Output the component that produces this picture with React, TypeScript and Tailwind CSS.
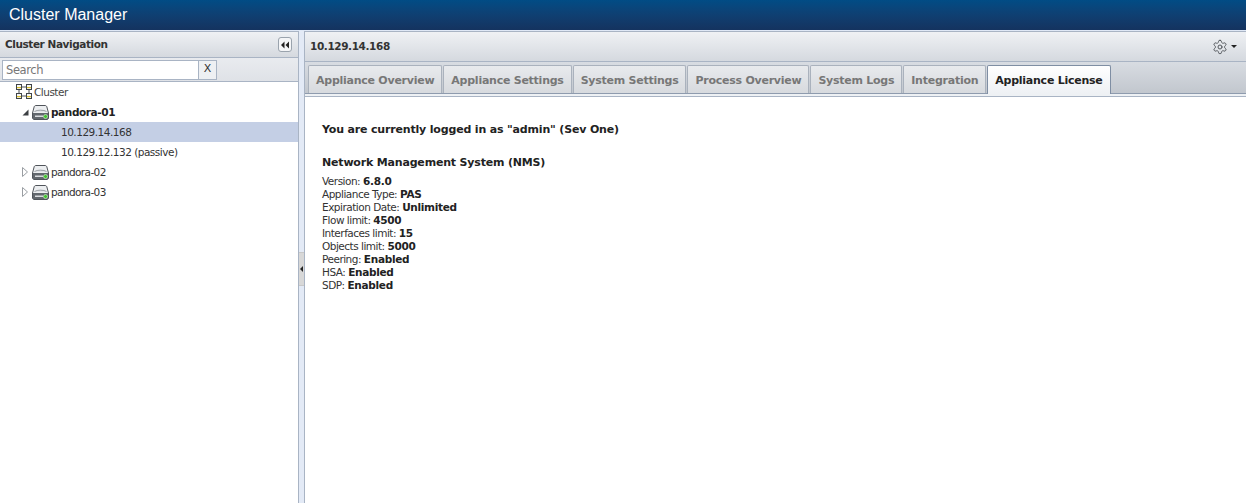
const font = "font-['DejaVu_Sans',sans-serif]";

function ServerIcon() {
  return (
    <svg width="17" height="15" viewBox="0 0 17 15" className="shrink-0">
      <path d="M4 0.5h9c1 0 1.6.5 1.9 1.5L16.5 8v5c0 .8-.7 1.5-1.5 1.5H2c-.8 0-1.5-.7-1.5-1.5V8L2.1 2C2.4 1 3 .5 4 .5z" fill="#eceef0" stroke="#50545a" />
      <path d="M2.5 6.5c2.5-1.8 9.5-1.8 12 0" fill="#d5d8dc" stroke="#9ca1a7" />
      <rect x="1" y="8" width="15" height="6" fill="#62676d" />
      <rect x="3" y="10.5" width="8" height="1.5" fill="#d9dcdf" />
      <circle cx="13.5" cy="11.5" r="2" fill="#3fc22f" stroke="#e0f8d8" strokeWidth="0.6" />
    </svg>
  );
}

function ClusterIcon() {
  const box = (x: number, y: number) => (
    <g key={`${x}-${y}`}>
      <rect x={x + 0.5} y={y + 0.5} width="5" height="5" fill="#f4f5f6" stroke="#3f4449" />
      <rect x={x + 1} y={y + 3} width="4" height="1.2" fill="#d8bf2a" />
    </g>
  );
  return (
    <svg width="16" height="16" viewBox="0 0 16 16" className="shrink-0">
      <path d="M3 6v3M13 6v3M6 3h4M6 12h4" stroke="#4a4f55" fill="none" />
      {box(0, 0)}
      {box(10, 0)}
      {box(0, 9)}
      {box(10, 9)}
    </svg>
  );
}

function Expanded() {
  return (
    <svg width="7" height="7" viewBox="0 0 7 7" className="shrink-0">
      <path d="M6.5 0.5V6.5H0.5z" fill="#3c3f43" />
    </svg>
  );
}

function Collapsed() {
  return (
    <svg width="6" height="10" viewBox="0 0 6 10" className="shrink-0">
      <path d="M0.5 0.5L5.5 5L0.5 9.5z" fill="#fff" stroke="#9a9ea3" />
    </svg>
  );
}

function Gear() {
  return (
    <svg width="16" height="16" viewBox="0 0 24 24" fill="none" stroke="#55595e" strokeWidth="1.5" strokeLinecap="round" strokeLinejoin="round">
      <path d="M12.22 2h-.44a2 2 0 0 0-2 2v.18a2 2 0 0 1-1 1.73l-.43.25a2 2 0 0 1-2 0l-.15-.08a2 2 0 0 0-2.73.73l-.22.38a2 2 0 0 0 .73 2.73l.15.1a2 2 0 0 1 1 1.72v.51a2 2 0 0 1-1 1.74l-.15.09a2 2 0 0 0-.73 2.73l.22.38a2 2 0 0 0 2.73.73l.15-.08a2 2 0 0 1 2 0l.43.25a2 2 0 0 1 1 1.73V20a2 2 0 0 0 2 2h.44a2 2 0 0 0 2-2v-.18a2 2 0 0 1 1-1.73l.43-.25a2 2 0 0 1 2 0l.15.08a2 2 0 0 0 2.73-.73l.22-.39a2 2 0 0 0-.73-2.73l-.15-.08a2 2 0 0 1-1-1.74v-.5a2 2 0 0 1 1-1.74l.15-.09a2 2 0 0 0 .73-2.73l-.22-.38a2 2 0 0 0-2.73-.73l-.15.08a2 2 0 0 1-2 0l-.43-.25a2 2 0 0 1-1-1.73V4a2 2 0 0 0-2-2z" />
      <circle cx="12" cy="12" r="3" />
    </svg>
  );
}

const tabs = ["Appliance Overview", "Appliance Settings", "System Settings", "Process Overview", "System Logs", "Integration"];

const rows: [string, string][] = [
  ["Version:", "6.8.0"],
  ["Appliance Type:", "PAS"],
  ["Expiration Date:", "Unlimited"],
  ["Flow limit:", "4500"],
  ["Interfaces limit:", "15"],
  ["Objects limit:", "5000"],
  ["Peering:", "Enabled"],
  ["HSA:", "Enabled"],
  ["SDP:", "Enabled"],
];

export default function App() {
  return (
    <div className={`${font} flex h-[503px] w-[1246px] flex-col overflow-hidden bg-[#dfe8f6] text-[11px] text-[#2b2b2b]`}>
      <header className="flex h-[30px] shrink-0 items-center bg-gradient-to-b from-[#014c85] to-[#14335f] pl-[9px] font-['Liberation_Sans',sans-serif] text-[16px] text-white">
        Cluster Manager
      </header>
      <div className="flex min-h-0 flex-1 pt-[1px]">
        <aside className="flex w-[299px] shrink-0 flex-col border-t border-r border-[#a9b4c4] bg-white">
          <div className="flex h-[26px] shrink-0 items-center justify-between border-b border-[#a9b4c4] bg-gradient-to-b from-[#eff1f4] to-[#d5d9df] pl-[5px] pr-[6px]">
            <span className="text-[10.5px] font-bold tracking-[-0.43px] text-[#333]">Cluster Navigation</span>
            <button className="flex h-[15px] w-[14px] items-center justify-center rounded-[3px] border border-[#9aa3ad] bg-[#f4f5f7]">
              <svg width="10" height="8" viewBox="0 0 10 8"><path d="M4.5 0.5L1 4l3.5 3.5zM9 0.5L5.5 4 9 7.5z" fill="#222" /></svg>
            </button>
          </div>
          <div className="flex h-[24px] shrink-0 items-center border-b border-[#a9b4c4] bg-gradient-to-b from-[#e9ebef] to-[#dfe2e7] pl-[2px]">
            <div className="flex h-[20px] w-[215px] border border-[#a9b4c4] bg-white">
              <span className="flex flex-1 items-center border-r border-[#a9b4c4] pl-[3px] pt-[2px] text-[11.5px] tracking-[-0.4px] text-[#777]">Search</span>
              <span className="flex w-[17px] items-center justify-center bg-[#eef0f3] text-[11px] text-[#333]">X</span>
            </div>
          </div>
          <div className="flex h-5 items-center gap-[2px] pl-[16px] text-[10.5px] tracking-[-0.5px] text-[#444]">
            <ClusterIcon />
            <span className="pt-[2px]">Cluster</span>
          </div>
          <div className="flex h-5 items-center pl-[22px] text-[10.5px]">
            <Expanded />
            <span className="ml-[3px] flex"><ServerIcon /></span>
            <span className="ml-[2px] pt-[2px] font-bold tracking-[-0.4px] text-[#222]">pandora-01</span>
          </div>
          <div className="flex h-5 items-center bg-[#c4cfe5] pl-[61px] pt-[2px] text-[10.5px] tracking-[-0.5px] text-[#333]">10.129.14.168</div>
          <div className="flex h-5 items-center pl-[61px] pt-[2px] text-[10.5px] tracking-[-0.5px] text-[#333]">10.129.12.132 (passive)</div>
          {["pandora-02", "pandora-03"].map((n) => (
            <div key={n} className="flex h-5 items-center pl-[22px] text-[10.5px] tracking-[-0.6px] text-[#333]">
              <Collapsed />
              <span className="ml-[4px] flex"><ServerIcon /></span>
              <span className="ml-[2px] pt-[2px]">{n}</span>
            </div>
          ))}
        </aside>

        <div className="flex w-[5px] shrink-0 items-center justify-center bg-[#e3eaf6]">
          <div className="relative top-[2px] flex h-[34px] w-[5px] items-center justify-center border-y border-[#c8c8c8] bg-[#d8d8d8]">
            <span className="h-0 w-0 border-y-[3px] border-r-[3px] border-y-transparent border-r-[#222]" />
          </div>
        </div>

        <main className="flex min-w-0 flex-1 flex-col border-t border-l border-[#a9b4c4] bg-white">
          <div className="flex h-[30px] shrink-0 items-center justify-between border-b border-[#a9b4c4] bg-gradient-to-b from-[#eff1f4] to-[#d5d9df] pl-[5px] pr-[9px]">
            <span className="text-[10.5px] font-bold tracking-[-0.4px] text-[#333]">10.129.14.168</span>
            <span className="flex items-center gap-[3px]">
              <Gear />
              <span className="h-0 w-0 border-x-[3px] border-t-[3px] border-x-transparent border-t-[#222]" />
            </span>
          </div>
          <div className="flex h-[32px] shrink-0 items-end gap-[1px] border-b border-[#8e9bae] bg-gradient-to-b from-[#d8dce2] to-[#c2c7ce] pl-[3px]">
            {tabs.map((t) => (
              <div key={t} className="flex h-[28px] items-center rounded-t-[2px] border border-b-0 border-[#aab2bd] bg-gradient-to-b from-[#e8eaed] to-[#d7dade] px-[7px] pt-[3px] text-[11px] font-bold tracking-[-0.25px] text-[#777]">
                {t}
              </div>
            ))}
            <div className="relative top-[1px] flex h-[29px] items-center rounded-t-[2px] border border-b-0 border-[#7f8ea3] bg-gradient-to-b from-[#ffffff] to-[#eef1f4] px-[7px] pt-[2px] text-[11px] font-bold tracking-[-0.25px] text-[#222]">
              Appliance License
            </div>
          </div>
          <div className="h-[3px] shrink-0 border-b border-[#a9b4c4] bg-[#eef1f4]" />
          <div className="pl-[17px] pt-[26px]">
            <h2 className="text-[11px] font-bold leading-[14px] tracking-[-0.17px] text-[#222]">You are currently logged in as "admin" (Sev One)</h2>
            <h3 className="mt-[19px] text-[11px] font-bold leading-[14px] tracking-[-0.18px] text-[#222]">Network Management System (NMS)</h3>
            <div className="mt-[5px] text-[10.5px] leading-[13px] tracking-[-0.5px] text-[#333]">
              {rows.map(([k, v]) => (
                <div key={k}>
                  {k} <b className="tracking-[-0.3px] text-[#222]">{v}</b>
                </div>
              ))}
            </div>
          </div>
        </main>
      </div>
    </div>
  );
}
